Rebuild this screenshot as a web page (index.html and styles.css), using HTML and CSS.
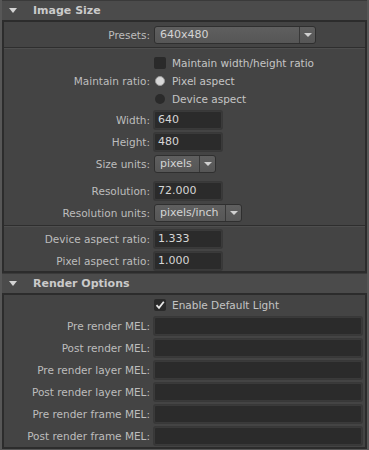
FILE: index.html
```html
<!DOCTYPE html>
<html lang="en">
<head>
  <meta charset="UTF-8">
  <title>Image Size</title>
  <link rel="stylesheet" href="styles.css">
</head>
<body>
  <!-- Image Size frame -->
  <section class="frame">
    <div class="frame-title"><span class="arrow"></span>Image Size</div>
    <div class="frame-body">
      <div class="row">
        <span class="label">Presets:</span>
        <div class="select presets"><span class="value">640x480</span><span class="caret"></span></div>
      </div>
      <div class="sep"></div>

      <div class="row opt first-opt">
        <span class="label"></span>
        <span class="check"></span><span class="opt-text">Maintain width/height ratio</span>
      </div>
      <div class="row opt">
        <span class="label">Maintain ratio:</span>
        <span class="radio on"></span><span class="opt-text">Pixel aspect</span>
      </div>
      <div class="row opt">
        <span class="label"></span>
        <span class="radio"></span><span class="opt-text">Device aspect</span>
      </div>

      <div class="fields">
        <div class="row">
          <span class="label">Width:</span>
          <div class="input short">640</div>
        </div>
        <div class="row">
          <span class="label">Height:</span>
          <div class="input short">480</div>
        </div>
        <div class="row">
          <span class="label">Size units:</span>
          <div class="select units"><span class="value">pixels</span><span class="caret"></span></div>
        </div>
        <div class="row spaced">
          <span class="label">Resolution:</span>
          <div class="input short">72.000</div>
        </div>
        <div class="row">
          <span class="label">Resolution units:</span>
          <div class="select res-units"><span class="value">pixels/inch</span><span class="caret"></span></div>
        </div>
      </div>
      <div class="sep"></div>

      <div class="fields">
        <div class="row">
          <span class="label">Device aspect ratio:</span>
          <div class="input short">1.333</div>
        </div>
        <div class="row">
          <span class="label">Pixel aspect ratio:</span>
          <div class="input short">1.000</div>
        </div>
      </div>
    </div>
  </section>

  <!-- Render Options frame -->
  <section class="frame">
    <div class="frame-title"><span class="arrow"></span>Render Options</div>
    <div class="frame-body render">
      <div class="row opt">
        <span class="label"></span>
        <span class="check checked">
          <svg width="12" height="12" viewBox="0 0 12 12"><path d="M2.5 6.2 L5 8.8 L9.8 2.8" fill="none" stroke="#e8e8e8" stroke-width="1.8"/></svg>
        </span><span class="opt-text">Enable Default Light</span>
      </div>
      <div class="fields">
        <div class="row"><span class="label">Pre render MEL:</span><div class="input long"></div></div>
        <div class="row"><span class="label">Post render MEL:</span><div class="input long"></div></div>
        <div class="row"><span class="label">Pre render layer MEL:</span><div class="input long"></div></div>
        <div class="row"><span class="label">Post render layer MEL:</span><div class="input long"></div></div>
        <div class="row"><span class="label">Pre render frame MEL:</span><div class="input long"></div></div>
        <div class="row"><span class="label">Post render frame MEL:</span><div class="input long"></div></div>
      </div>
    </div>
  </section>
</body>
</html>
```

FILE: styles.css
```css
/* Reset & General */
* {
  margin: 0;
  padding: 0;
  box-sizing: border-box;
}

body {
  width: 369px;
  height: 450px;
  overflow: hidden;
  padding: 0 2px 0 2px;
  background-color: #575757;
  font-family: 'DejaVu Sans', 'Liberation Sans', sans-serif;
  font-size: 10.5px;
  color: #bdbdbd;
}

/* Collapsible frames */
.frame-title {
  height: 20px;
  display: flex;
  align-items: center;
  padding-left: 7px;
  background-color: #4b4b4b;
  border-top: 1px solid #3a3a3a;
  font-weight: bold;
  font-size: 11px;
  color: #cacaca;
}

.arrow {
  width: 0;
  height: 0;
  border-left: 4px solid transparent;
  border-right: 4px solid transparent;
  border-top: 5px solid #d4d4d4;
  margin-right: 16px;
}

.frame-body {
  background-color: #444444;
  border: 2px solid #2c2c2c;
  padding: 4px 0 1px 0;
}

.frame-body.render {
  padding: 1px 0 2px 0;
}

/* Rows */
.row {
  display: flex;
  align-items: center;
  height: 18px;
}

.label {
  width: 146px;
  flex: none;
  text-align: right;
  margin-right: 4px;
  white-space: nowrap;
}

.fields {
  display: flex;
  flex-direction: column;
  gap: 4px;
  padding: 3px 0 0 0;
}

.fields .spaced {
  margin-top: 5px;
}

.sep {
  height: 2px;
  margin-top: 3px;
  border-top: 1px solid #2e2e2e;
  border-bottom: 1px solid #4e4e4e;
}

/* Checkbox / radio rows */
.opt {
  height: 18px;
}

.first-opt {
  margin-top: 5px;
}

.opt-text {
  margin-left: 6px;
  color: #c4c4c4;
}

.check {
  width: 12px;
  height: 12px;
  flex: none;
  background-color: #2a2a2a;
  border-radius: 2px;
  display: flex;
  align-items: center;
  justify-content: center;
}

.radio {
  width: 10px;
  height: 10px;
  flex: none;
  margin: 0 1px;
  border-radius: 50%;
  background-color: #2a2a2a;
}

.radio.on {
  background-color: #d8d8d8;
  border: 1px solid #9a9a9a;
}

/* Text fields */
.input {
  height: 18px;
  background-color: #2b2b2b;
  border: 1px solid #3a3a3a;
  border-radius: 2px;
  padding-left: 3px;
  line-height: 16px;
  font-size: 11px;
  color: #d6d6d6;
  box-shadow: 0 0 0 1px #383838;
}

.input.short {
  width: 68px;
}

.input.long {
  width: 208px;
}

/* Dropdowns */
.select {
  height: 18px;
  display: flex;
  align-items: stretch;
  background: linear-gradient(#5f5f5f, #565656);
  border: 1px solid #2f2f2f;
  border-radius: 3px;
  font-size: 11px;
  color: #d4d4d4;
}

.select .value {
  flex: 1;
  padding-left: 5px;
  line-height: 16px;
}

.select .caret {
  width: 16px;
  border-left: 1px solid #383838;
  display: flex;
  align-items: center;
  justify-content: center;
}

.select .caret::after {
  content: "";
  border-left: 4px solid transparent;
  border-right: 4px solid transparent;
  border-top: 4px solid #d0d0d0;
}

.presets {
  width: 162px;
}

.units {
  width: 62px;
}

.res-units {
  width: 88px;
}
```
